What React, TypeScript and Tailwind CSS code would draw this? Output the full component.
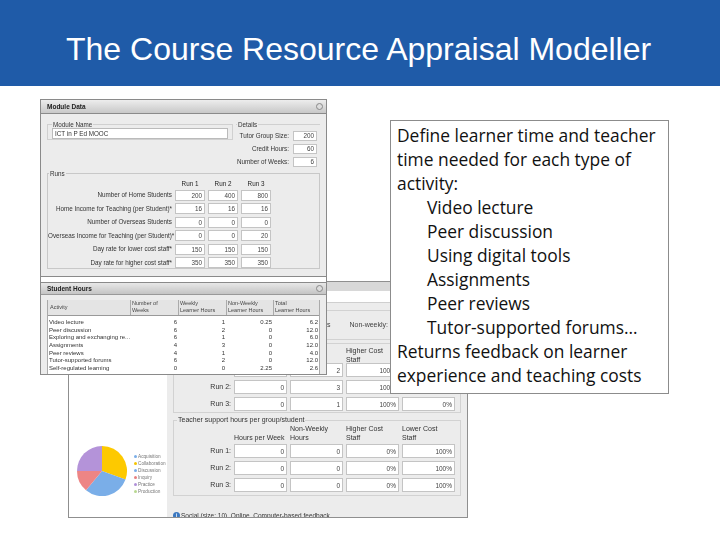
const activities = ['Acquisition', 'Collaboration', 'Discussion', 'Inquiry', 'Practice', 'Production']
const legendDots = ['bg-[#7aaee8]', 'bg-[#f5c400]', 'bg-[#7aaee8]', 'bg-[#e88080]', 'bg-[#b090d8]', 'bg-[#b8d890]']

const moduleRuns = [
  ['Number of Home Students', '200', '400', '800'],
  ['Home Income for Teaching (per Student)*', '16', '16', '16'],
  ['Number of Overseas Students', '0', '0', '0'],
  ['Overseas Income for Teaching (per Student)*', '0', '0', '20'],
  ['Day rate for lower cost staff*', '150', '150', '150'],
  ['Day rate for higher cost staff*', '350', '350', '350'],
]

const hours = [
  ['Video lecture', '6', '1', '0.25', '6.2'],
  ['Peer discussion', '6', '2', '0', '12.0'],
  ['Exploring and exchanging re...', '6', '1', '0', '6.0'],
  ['Assignments', '4', '3', '0', '12.0'],
  ['Peer reviews', '4', '1', '0', '4.0'],
  ['Tutor-supported forums', '6', '2', '0', '12.0'],
  ['Self-regulated learning', '0', '0', '2.25', '2.6'],
]

const boxLines = [
  ['Define learner time and teacher', false],
  ['time needed for each type of', false],
  ['activity:', false],
  ['Video lecture', true],
  ['Peer discussion', true],
  ['Using digital tools', true],
  ['Assignments', true],
  ['Peer reviews', true],
  ['Tutor-supported forums…', true],
  ['Returns feedback on learner', false],
  ['experience and teaching costs', false],
] as const

function Field({ value, className }: { value: string; className: string }) {
  return (
    <div className={`bg-white border border-[#c4c4c4] text-right pr-[2px] text-[#444] overflow-hidden ${className}`}>
      {value}
    </div>
  )
}

function RunRows({ rows }: { rows: string[][] }) {
  return (
    <div className="flex flex-col gap-[3px]">
      {rows.map((r, i) => (
        <div key={i} className="flex items-center gap-[3px]">
          <span className="w-[57px] text-right text-[#333]">Run {i + 1}:</span>
          {r.map((v, j) => (
            <Field key={j} value={v} className="w-[53px] h-[14px] leading-[13px] text-[6.5px]" />
          ))}
        </div>
      ))}
    </div>
  )
}

function Pie() {
  return (
    <svg width="52" height="52" viewBox="-26 -26 52 52">
      <path d="M0 0L0 -25A25 25 0 0 1 23.5 8.6Z" fill="#fdc900" />
      <path d="M0 0L23.5 8.6A25 25 0 0 1 -16 19.2Z" fill="#7aaee8" />
      <path d="M0 0L-16 19.2A25 25 0 0 1 -25 0Z" fill="#ed8585" />
      <path d="M0 0L-25 0A25 25 0 0 1 0 -25Z" fill="#b493d9" />
    </svg>
  )
}

function BackWindow() {
  return (
    <div className="absolute left-[68px] top-[281px] w-[400px] h-[237px] border border-[#8f8f8f] bg-[#ececec] flex overflow-hidden font-['Liberation_Sans',sans-serif] text-[7px] blur-[0.3px]">
      <div className="w-[98px] bg-white flex items-end pb-[20px] pl-[7px] gap-[6px]">
        <Pie />
        <div className="flex flex-col text-[4.7px] leading-[7px] text-[#777] mb-[2px] whitespace-nowrap">
          {activities.map((a, i) => (
            <div key={a} className="flex items-center gap-[1px]">
              <span className={`w-[3px] h-[3px] rounded-full ${legendDots[i]}`} />
              {a}
            </div>
          ))}
        </div>
      </div>
      <div className="flex-1 flex flex-col">
        <div className="h-[9px] shrink-0 bg-[#d8d8d8]" />
        <div className="h-[12px] shrink-0 bg-white border-b border-[#cfcfcf]" />
        <div className="h-[30px] shrink-0 mt-[7px] mx-[6px] border border-[#d2d2d2] flex items-center justify-end gap-[19px] pr-[72px] text-[#444]">
          <span>Hours</span>
          <span>Non-weekly:</span>
        </div>
        <div className="mt-[3px] shrink-0 mx-[6px] h-[70px] border border-[#d2d2d2] pt-[3px] text-[#333]">
          <div className="flex gap-[3px] h-[16px] pl-[60px] leading-[8.5px]">
            <span className="w-[53px]" />
            <span className="w-[53px]" />
            <span className="w-[53px]">Higher Cost<br />Staff</span>
            <span className="w-[53px]">Lower Cost<br />Staff</span>
          </div>
          <RunRows rows={[['0', '2', '100%', '0%'], ['0', '3', '100%', '0%'], ['0', '1', '100%', '0%']]} />
        </div>
        <fieldset className="mt-[3px] shrink-0 mx-[6px] h-[80px] border border-[#d2d2d2] text-[#333]">
          <legend className="ml-[3px] px-[1px] leading-[8px]">Teacher support hours per group/student</legend>
          <div className="flex gap-[3px] h-[20px] pl-[60px] leading-[8.5px] items-end pb-[2px]">
            <span className="w-[53px] whitespace-nowrap">Hours per Week</span>
            <span className="w-[53px]">Non-Weekly<br />Hours</span>
            <span className="w-[53px]">Higher Cost<br />Staff</span>
            <span className="w-[53px]">Lower Cost<br />Staff</span>
          </div>
          <RunRows rows={[['0', '0', '0%', '100%'], ['0', '0', '0%', '100%'], ['0', '0', '0%', '100%']]} />
        </fieldset>
        <div className="mt-[15px] shrink-0 pl-[6px] flex items-center gap-[1px] text-[6.5px] text-[#333] whitespace-nowrap">
          <span className="w-[7px] h-[7px] rounded-full bg-[#3b78c0] text-white text-center text-[5px] leading-[7px] font-bold">i</span>
          Social (size: 10), Online, Computer-based feedback
        </div>
      </div>
    </div>
  )
}

function FrontWindows() {
  return (
    <div className="absolute left-[40px] top-[99px] w-[287px] h-[276px] bg-white border border-[#8a8a8a] font-['Liberation_Sans',sans-serif] text-[6.3px] text-[#333] flex flex-col blur-[0.3px]">
      <div className="h-[14px] flex items-center justify-between pl-[6px] pr-[3px] bg-gradient-to-b from-[#ededed] to-[#c8c8c8] border-b border-[#8a8a8a]">
        <span className="text-[6.5px] font-bold text-[#222]">Module Data</span>
        <span className="w-[7px] h-[7px] rounded-full border border-[#888] bg-[#ddd]" />
      </div>
      <div className="h-[163px] bg-[#ececec] border-b border-[#8a8a8a] px-[6px] pt-[6px]">
        <div className="flex gap-[3px] h-[49px]">
          <fieldset className="w-[186px] h-[20px] border border-[#d0d0d0] px-[4px]">
            <legend className="px-[1px] -mb-[2px]">Module Name</legend>
            <div className="h-[11px] bg-white border border-[#bbb] leading-[9px] pl-[2px] mt-[1px]">ICT in P Ed MOOC</div>
          </fieldset>
          <fieldset className="flex-1 h-[49px] border-t border-[#d0d0d0] pr-[3px]">
            <legend className="px-[1px] ml-[1px]">Details</legend>
            {[['Tutor Group Size:', '200'], ['Credit Hours:', '60'], ['Number of Weeks:', '6']].map(([l, v]) => (
              <div key={l} className="flex items-center justify-end gap-[4px] h-[13px]">
                <span className="whitespace-nowrap">{l}</span>
                <Field value={v} className="w-[24px] h-[10px] leading-[8px]" />
              </div>
            ))}
          </fieldset>
        </div>
        <fieldset className="h-[100px] border border-[#c8c8c8]">
          <legend className="ml-[1px] px-[1px]">Runs</legend>
          <div className="flex gap-[3px] pl-[127px] h-[10px] items-center text-[#222]">
            {['Run 1', 'Run 2', 'Run 3'].map((r) => (
              <span key={r} className="w-[30px] text-center">{r}</span>
            ))}
          </div>
          {moduleRuns.map(([label, a, b, c]) => (
            <div key={label} className="flex items-center gap-[3px] h-[13.5px]">
              <span className="w-[124px] text-right whitespace-nowrap">{label}</span>
              {[a, b, c].map((v, i) => (
                <Field key={i} value={v} className="w-[30px] h-[11px] leading-[9px]" />
              ))}
            </div>
          ))}
        </fieldset>
      </div>
      <div className="h-[6px] bg-white border-b border-[#8a8a8a]" />
      <div className="h-[12px] flex items-center justify-between pl-[6px] pr-[3px] bg-gradient-to-b from-[#e8e8e8] to-[#c4c4c4] border-b border-[#999]">
        <span className="text-[6.5px] font-bold text-[#222]">Student Hours</span>
        <span className="w-[7px] h-[7px] rounded-full border border-[#888] bg-[#ddd]" />
      </div>
      <div className="flex-1 bg-[#ececec] px-[6px] pt-[5px]">
        <div className="bg-white h-[74px] border-x border-[#aaa]">
          <div className="grid grid-cols-[82px_48px_48px_47px_1fr] h-[16px] bg-[#e4e4e4] border-b border-[#999] text-[5.5px] leading-[7px] text-[#444]">
            <span className="pl-[2px] self-center">Activity</span>
            <span className="pl-[1px] border-l border-[#aaa]">Number of<br />Weeks</span>
            <span className="pl-[1px] border-l border-[#aaa]">Weekly<br />Learner Hours</span>
            <span className="pl-[1px] border-l border-[#aaa]">Non-Weekly<br />Learner Hours</span>
            <span className="pl-[1px] border-l border-[#aaa]">Total<br />Learner Hours</span>
          </div>
          <div className="pt-[3px]">
            {hours.map((r) => (
              <div key={r[0]} className="grid grid-cols-[82px_48px_48px_47px_1fr] h-[7.7px] leading-[7.7px] text-[6px] text-[#333]">
                <span className="pl-[1px] whitespace-nowrap">{r[0]}</span>
                {r.slice(1).map((v, i) => (
                  <span key={i} className="text-right pr-[1px]">{v}</span>
                ))}
              </div>
            ))}
          </div>
        </div>
      </div>
    </div>
  )
}

export default function App() {
  return (
    <div className="relative w-[720px] h-[540px] bg-white overflow-hidden">
      <header className="h-[86px] bg-[#1f5ba8] flex items-center pl-[66px] pt-[12px]">
        <h1 className="font-['Liberation_Sans',sans-serif] text-[32px] text-white whitespace-nowrap">
          The Course Resource Appraisal Modeller
        </h1>
      </header>
      <BackWindow />
      <FrontWindows />
      <div className="absolute left-[390px] top-[120px] w-[279px] h-[274px] bg-white border border-[#8c8c8c] pl-[6px] pt-[2px] font-['Open_Sans',sans-serif] text-[17.4px] leading-[24px] text-[#111]">
        {boxLines.map(([line, indented]) => (
          <div key={line} className={indented ? 'pl-[30px] whitespace-nowrap' : 'whitespace-nowrap'}>
            {line}
          </div>
        ))}
      </div>
    </div>
  )
}
